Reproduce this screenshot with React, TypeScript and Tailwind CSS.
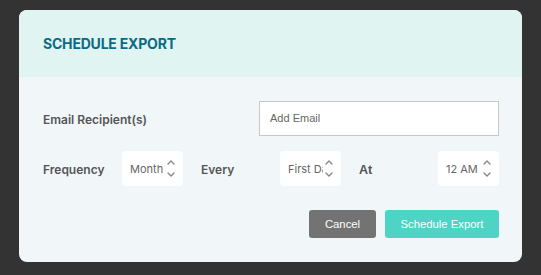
import React from "react";

const Spinner = () => (
  <svg width="8" height="22" viewBox="0 0 8 22" className="shrink-0">
    <path d="M1 7 L4 4 L7 7" fill="none" stroke="#888" strokeWidth="1.4" strokeLinecap="round" strokeLinejoin="round" />
    <path d="M1 16 L4 19 L7 16" fill="none" stroke="#888" strokeWidth="1.4" strokeLinecap="round" strokeLinejoin="round" />
  </svg>
);

const Select = ({ value }: { value: string }) => (
  <div className="flex h-[35px] w-[61px] items-center rounded-[4px] bg-white pl-[8px] pr-[8px]">
    <span className="w-[35px] overflow-hidden whitespace-nowrap text-[11px] leading-[14px] text-[#666] [font-family:Inter,'Liberation_Sans',sans-serif]">
      {value}
    </span>
    <span className="ml-auto -mt-[2px]"><Spinner /></span>
  </div>
);

const label = "text-[12px] font-semibold text-[#555] [font-family:Inter,sans-serif] pt-[3px]";

export default function App() {
  return (
    <div className="min-h-[275px] w-full bg-[#333333] pl-[19px] pr-[19px] pt-[10px]">
      <div className="w-[503px] overflow-hidden rounded-[8px] bg-[#f1f6f9]">
        <div className="flex h-[67px] items-center bg-[#e0f4f2] pl-[24px]">
          <h1 className="text-[14px] font-bold tracking-[-0.2px] text-[#0b6b85] [font-family:Inter,sans-serif]">
            SCHEDULE EXPORT
          </h1>
        </div>
        <div className="pl-[24px] pr-[23px] pt-[24px] pb-[24px]">
          <div className="flex items-center">
            <span className={`w-[216px] ${label}`}>Email Recipient(s)</span>
            <div className="flex h-[35px] w-[240px] items-center border border-[#c8c8c8] bg-white pl-[10px] text-[11px] text-[#666] [font-family:'Liberation_Sans',Arial,sans-serif]">
              Add Email
            </div>
          </div>
          <div className="mt-[15px] flex items-center">
            <span className={`w-[79px] ${label}`}>Frequency</span>
            <Select value="Month" />
            <span className={`ml-[18px] w-[79px] ${label}`}>Every</span>
            <Select value="First Day" />
            <span className="ml-[18px] w-[79px] pt-[3px] text-[12.5px] font-bold text-[#555] [font-family:'Liberation_Sans',Arial,sans-serif]">At</span>
            <Select value="12 AM" />
          </div>
          <div className="mt-[24px] flex justify-end gap-[9px]">
            <button className="h-[28px] w-[67px] rounded-[3px] bg-[#737373] text-[11.3px] text-white [font-family:'Liberation_Sans',Arial,sans-serif]">
              Cancel
            </button>
            <button className="h-[28px] w-[114px] rounded-[3px] bg-[#4dd4c4] text-[11.3px] text-white [font-family:'Liberation_Sans',Arial,sans-serif]">
              Schedule Export
            </button>
          </div>
        </div>
      </div>
    </div>
  );
}
